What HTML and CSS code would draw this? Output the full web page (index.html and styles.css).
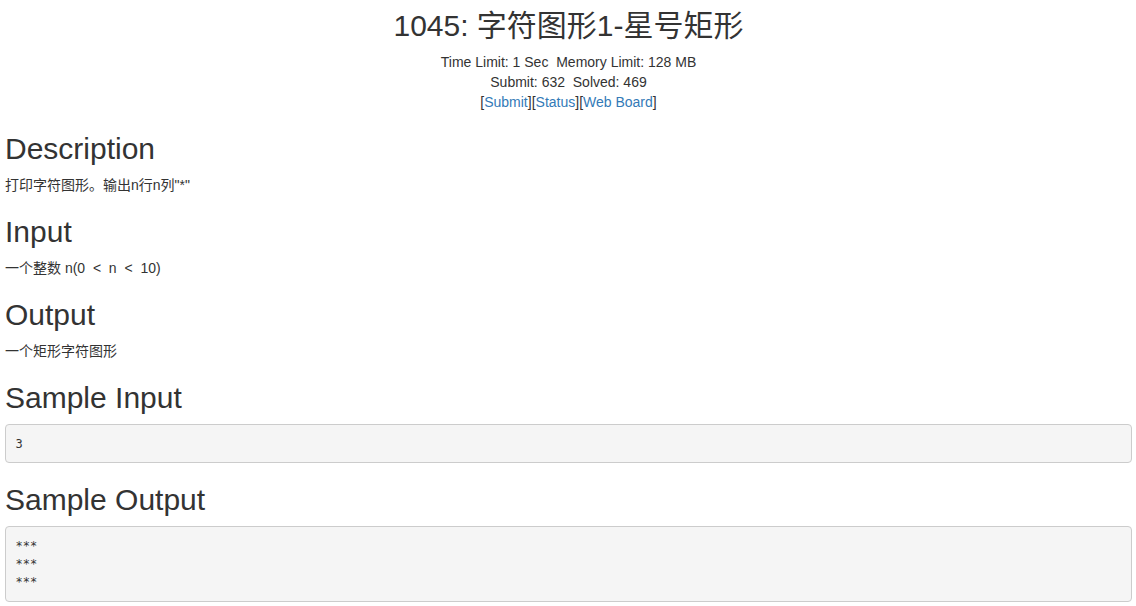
FILE: index.html
```html
<!DOCTYPE html>
<html>
<head>
<meta charset="utf-8">
<title>1045: 字符图形1-星号矩形</title>
<link rel="stylesheet" href="styles.css">
</head>
<body>
<div class="page">
  <header class="problem-head">
    <h2 class="title">1045: 字符图形1-星号矩形</h2>
    <div class="meta">
      <div>Time Limit: 1 Sec&nbsp;&nbsp;Memory Limit: 128 MB</div>
      <div>Submit: 632&nbsp;&nbsp;Solved: 469</div>
      <div>[<a href="#">Submit</a>][<a href="#">Status</a>][<a href="#">Web Board</a>]</div>
    </div>
  </header>

  <h2 class="section">Description</h2>
  <div class="content">打印字符图形。输出n行n列"*"</div>

  <h2 class="section">Input</h2>
  <div class="content">一个整数 n(0 &nbsp;&lt; &nbsp;n &nbsp;&lt; &nbsp;10)</div>

  <h2 class="section">Output</h2>
  <div class="content">一个矩形字符图形</div>

  <h2 class="section">Sample Input</h2>
  <pre class="sample">3</pre>

  <h2 class="section">Sample Output</h2>
  <pre class="sample">***
***
***</pre>
</div>
</body>
</html>
```

FILE: styles.css
```css
html, body {
  margin: 0;
  padding: 0;
  background: #fff;
}

body {
  font-family: "Liberation Sans", Arial, "Noto Sans CJK SC", sans-serif;
  font-size: 14px;
  line-height: 20px;
  color: #333;
}

.page {
  padding: 0 4px 0 5px;
}

a {
  color: #337ab7;
  text-decoration: none;
}

h2 {
  font-family: "Liberation Sans", Arial, "Noto Sans CJK SC", sans-serif;
  font-weight: 500;
  font-size: 30px;
  line-height: 33px;
  margin: 20px 0 10px;
  color: #333;
}

.problem-head {
  text-align: center;
}

.title {
  margin-top: 9px;
  font-weight: normal;
}

.section {
  font-weight: normal;
}

.content {
  margin: 0;
}

.sample {
  margin: 0 0 10px;
  padding: 9.5px;
  background: #f5f5f5;
  border: 1px solid #ccc;
  border-radius: 4px;
  font-family: "DejaVu Sans Mono", "Liberation Mono", monospace;
  font-size: 12px;
  line-height: 18.3px;
  color: #333;
  white-space: pre;
}
```
